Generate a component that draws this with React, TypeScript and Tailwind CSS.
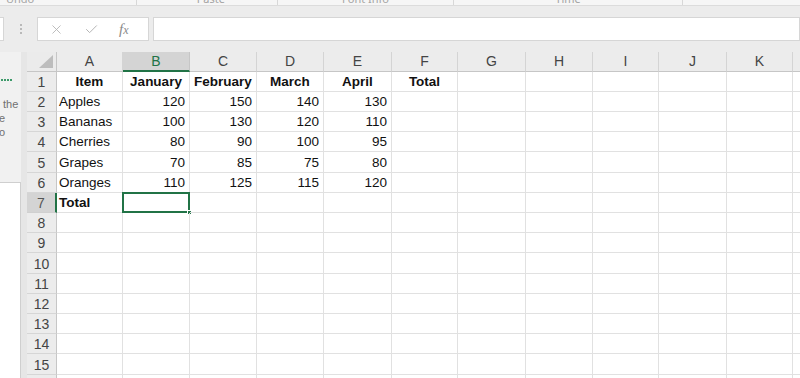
import React from "react";
import { X, Check } from "lucide-react";

const cols = [
	{ label: "A", w: 66 },
	{ label: "B", w: 67 },
	{ label: "C", w: 67 },
	{ label: "D", w: 67 },
	{ label: "E", w: 68 },
	{ label: "F", w: 66 },
	{ label: "G", w: 68 },
	{ label: "H", w: 67 },
	{ label: "I", w: 66 },
	{ label: "J", w: 68 },
	{ label: "K", w: 66 },
	{ label: "L", w: 40 },
];

type Cell = string | number | undefined;

const data: Cell[][] = [
	["Item", "January", "February", "March", "April", "Total"],
	["Apples", 120, 150, 140, 130],
	["Bananas", 100, 130, 120, 110],
	["Cherries", 80, 90, 100, 95],
	["Grapes", 70, 85, 75, 80],
	["Oranges", 110, 125, 115, 120],
	["Total"],
];

const font = { fontFamily: '"Liberation Sans", Arial, sans-serif' };

function RibbonStrip() {
	// bottoms of the ribbon group labels, cut off by the window
	const groups = [
		{ w: 137, label: "Undo", align: "justify-start pl-[6px]" },
		{ w: 141, label: "Paste", align: "justify-end pr-[52px]" },
		{ w: 176, label: "Font Info", align: "justify-center" },
		{ w: 229, label: "Time", align: "justify-center" },
		{ w: 117, label: "", align: "justify-center" },
	];
	return (
		<div className="flex h-[6px] shrink-0 overflow-hidden border-b border-[#dcdcdc] bg-[#f6f6f6]">
			{groups.map((g, i) => (
				<div
					key={i}
					className={`flex ${g.align} border-r border-[#d8d8d8] last:border-r-0`}
					style={{ width: g.w }}
				>
					<span className="-mt-[7px] text-[11px] leading-[11px] text-[#a4a4a4]">
						{g.label}
					</span>
				</div>
			))}
		</div>
	);
}

function FormulaBar() {
	return (
		<div className="flex h-[46px] shrink-0 items-start bg-[#ececec] pt-[11px]">
			<div className="h-[24px] w-[4px] border-y border-r border-[#d6d6d6] bg-white" />
			<div className="flex h-[24px] w-[33px] flex-col items-center justify-center gap-[2px]">
				<span className="h-[2px] w-[2px] rounded-full bg-[#a8a8a8]" />
				<span className="h-[2px] w-[2px] rounded-full bg-[#a8a8a8]" />
				<span className="h-[2px] w-[2px] rounded-full bg-[#a8a8a8]" />
			</div>
			<div className="flex h-[24px] w-[112px] items-center border border-[#d6d6d6] bg-white">
				<X className="ml-[11px] h-[15px] w-[15px] text-[#b4b4b4]" strokeWidth={1.4} />
				<Check className="ml-[20px] h-[15px] w-[15px] text-[#b4b4b4]" strokeWidth={1.6} />
				<span
					className="ml-[20px] text-[15px] italic text-[#8a8a8a]"
					style={{ fontFamily: '"Liberation Serif", "Times New Roman", serif' }}
				>
					f<span className="text-[12px]">x</span>
				</span>
			</div>
			<div className="ml-[4px] h-[24px] flex-1 border border-[#d6d6d6] bg-white" />
		</div>
	);
}

function SidePanel() {
	return (
		<div className="flex w-[21px] shrink-0 flex-col bg-[#f1f1f1]">
			<div className="mt-[27px] flex w-[12px] justify-between pl-[1px]">
				<span className="h-[2px] w-[2px] bg-[#3c9a6a]" />
				<span className="h-[2px] w-[2px] bg-[#3c9a6a]" />
				<span className="h-[2px] w-[2px] bg-[#3c9a6a]" />
				<span className="h-[2px] w-[2px] bg-[#3c9a6a]" />
			</div>
			<div className="mt-[16px] flex flex-col text-[11px] leading-[14px] text-[#707070]" style={font}>
				<span className="pl-[3px]">the</span>
				<span className="-ml-[1px]">e</span>
				<span className="-ml-[1px]">o</span>
			</div>
			<div className="mt-[43px] flex-1 border-t border-r border-[#cfcfcf] bg-white" />
		</div>
	);
}

function Sheet() {
	const rowCount = 16;
	return (
		<div className="flex-1 overflow-hidden bg-white" style={font}>
			{/* column headers */}
			<div className="flex h-[20px]">
				<div className="relative w-[30px] shrink-0 border-r border-b border-[#c6c6c6] bg-[#ebebeb]">
					<svg className="absolute right-[3px] bottom-[3px]" width="14" height="13" viewBox="0 0 14 13">
						<polygon points="14,0 14,13 0,13" fill="#bdbdbd" />
					</svg>
				</div>
				{cols.map((c) => {
					const sel = c.label === "B";
					return (
						<div
							key={c.label}
							className={`flex shrink-0 items-center justify-center border-r text-[14px] ${
								sel
									? "border-b-2 border-r-[#c6c6c6] border-b-[#217346] bg-[#d4d4d4] text-[#217346]"
									: "border-b border-[#d4d4d4] border-b-[#c6c6c6] bg-[#ececec] text-[#444]"
							}`}
							style={{ width: c.w }}
						>
							{c.label}
						</div>
					);
				})}
			</div>
			{/* rows: every fifth row is a pixel taller, as in the reference */}
			{Array.from({ length: rowCount }, (_, r) => {
				const row = data[r] || [];
				const rowSel = r === 6;
				const h = r % 5 === 4 ? "h-[21px]" : "h-[20px]";
				return (
					<div key={r} className={`flex ${h}`}>
						<div
							className={`flex w-[30px] shrink-0 items-center justify-center border-b pt-[2px] text-[14px] ${
								rowSel
									? "border-r-2 border-b-[#d0d0d0] border-r-[#217346] bg-[#d4d4d4] text-[#555]"
									: "border-r border-[#d6d6d6] border-r-[#c6c6c6] bg-[#ececec] text-[#444]"
							}`}
						>
							{r + 1}
						</div>
						{cols.map((c, ci) => {
							const v = row[ci];
							const bold = r === 0 || (r === 6 && ci === 0);
							const isNum = typeof v === "number";
							const align = r === 0 ? "justify-center" : isNum ? "justify-end pr-[4px]" : "justify-start pl-[2px]";
							const selected = r === 6 && ci === 1;
							return (
								<div
									key={c.label}
									className={`relative flex shrink-0 items-center border-r border-b border-[#e1e1e1] pt-[2px] text-[13.5px] text-[#111] ${align} ${
										bold ? "font-bold" : ""
									}`}
									style={{ width: c.w }}
								>
									{v}
									{selected && (
										<div className="absolute -top-[1px] -left-[1px] -right-[1px] -bottom-[1px] border-2 border-[#217346]">
											<span className="absolute -right-[4px] -bottom-[4px] h-[5px] w-[5px] border border-white bg-[#217346]" />
										</div>
									)}
								</div>
							);
						})}
					</div>
				);
			})}
		</div>
	);
}

export default function App() {
	return (
		<div className="flex h-[378px] w-[800px] flex-col overflow-hidden bg-[#ececec]">
			<RibbonStrip />
			<FormulaBar />
			<div className="flex min-h-0 flex-1">
				<SidePanel />
				<div className="w-[6px] shrink-0 bg-[#e6e6e6]" />
				<Sheet />
			</div>
		</div>
	);
}
